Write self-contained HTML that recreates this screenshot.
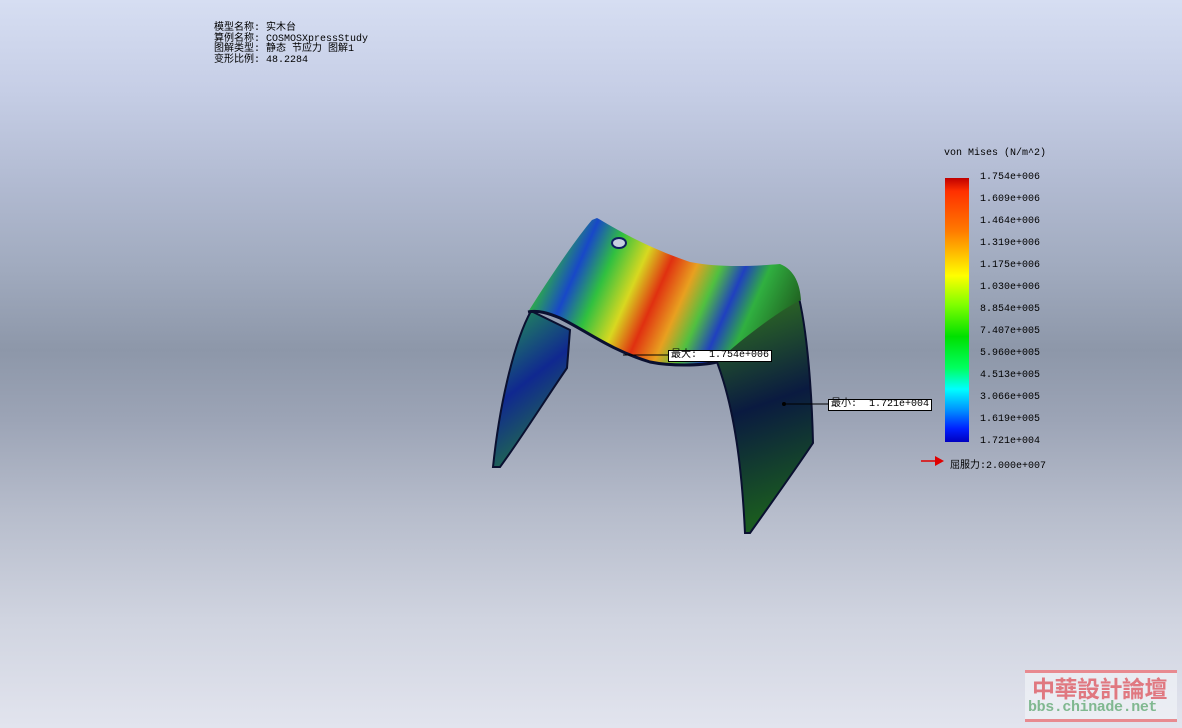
<!DOCTYPE html>
<html><head><meta charset="utf-8"><style>
html,body{margin:0;padding:0}
body{width:1182px;height:728px;overflow:hidden;position:relative;
background:linear-gradient(to bottom,#d6def2 0px,#c6cee6 90px,#b0b9d0 190px,#a0aabe 270px,#8d97a9 350px,#9ca4b6 420px,#b6bccb 510px,#d0d4e0 620px,#e2e4ee 728px);
font-family:"Liberation Mono","WenQuanYi Zen Hei","Noto Sans CJK SC",monospace;}
.info{position:absolute;left:214px;top:24px;font-size:10px;line-height:10.5px;color:#000;white-space:pre}
.lg{position:absolute;font-size:10px;color:#000;white-space:pre}
.bar{position:absolute;left:945px;top:178px;width:24px;height:264px;
background:linear-gradient(to bottom,#c00000 0%,#ff3000 5%,#ff7a00 20%,#ffff00 37%,#80ff00 48%,#00e000 60%,#00ff60 72%,#00ffff 80%,#0090ff 88%,#0020ff 95%,#0000c0 100%)}
.box{position:absolute;background:#fff;border:1px solid #000;font-size:10px;line-height:10px;padding:0 2px;white-space:pre}
</style></head><body>
<div class="info">模型名称: 实木台
算例名称: COSMOSXpressStudy
图解类型: 静态 节应力 图解1
变形比例: 48.2284</div>

<svg width="1182" height="728" style="position:absolute;left:0;top:0">
<defs>
<linearGradient id="seat" gradientUnits="userSpaceOnUse" x1="545" y1="260" x2="775" y2="362">
<stop offset="0" stop-color="#30c030"/>
<stop offset="0.13" stop-color="#1848c8"/>
<stop offset="0.24" stop-color="#30c040"/>
<stop offset="0.36" stop-color="#d8d820"/>
<stop offset="0.46" stop-color="#e03010"/>
<stop offset="0.56" stop-color="#e8a020"/>
<stop offset="0.65" stop-color="#50c040"/>
<stop offset="0.74" stop-color="#2040c0"/>
<stop offset="0.83" stop-color="#30b040"/>
<stop offset="1" stop-color="#206020"/>
</linearGradient>
<linearGradient id="lleg" gradientUnits="userSpaceOnUse" x1="500" y1="330" x2="570" y2="420">
<stop offset="0" stop-color="#208060"/>
<stop offset="0.5" stop-color="#102890"/>
<stop offset="1" stop-color="#206850"/>
</linearGradient>
<linearGradient id="rleg" gradientUnits="userSpaceOnUse" x1="740" y1="300" x2="810" y2="500">
<stop offset="0" stop-color="#307020"/>
<stop offset="0.5" stop-color="#0a1a40"/>
<stop offset="1" stop-color="#1a5a20"/>
</linearGradient>
</defs>
<path d="M531,311 C515,340 500,400 493,467 L500,467 C520,440 545,400 567,368 L570,330 Z" fill="url(#lleg)" stroke="#0a1030" stroke-width="2"/>
<path d="M717,362 C735,410 742,470 745,533 L750,533 C770,505 795,470 813,443 C812,400 808,330 797,290 L760,290 Z" fill="url(#rleg)" stroke="#0a1030" stroke-width="2"/>
<path d="M597,218 C610,225 640,245 690,262 C720,268 755,266 780,264 C795,270 800,285 801,300 C780,310 740,340 717,362 C700,366 670,366 650,362 C610,350 585,330 560,318 C548,313 538,310 528,312 C548,280 575,240 592,220 Z" fill="url(#seat)"/>
<path d="M528,312 C538,310 548,313 560,318 C585,330 610,350 650,362 C670,366 700,366 717,362" fill="none" stroke="#0a1030" stroke-width="3"/>
<ellipse cx="619" cy="243" rx="7" ry="5" fill="#c8d0e0" stroke="#102060" stroke-width="2"/>
<line x1="623" y1="355" x2="669" y2="355" stroke="#000"/>
<line x1="784" y1="404" x2="829" y2="404" stroke="#000"/>
<circle cx="784" cy="404" r="2" fill="#000"/>
<line x1="921" y1="461" x2="936" y2="461" stroke="#e00000" stroke-width="1.5"/>
<polygon points="935,456 944,461 935,466" fill="#e00000"/>
</svg>

<div class="box" style="left:668px;top:350px">最大:  1.754e+006</div>
<div class="box" style="left:828px;top:399px">最小:  1.721e+004</div>

<div class="lg" style="left:944px;top:148px">von Mises (N/m^2)</div>
<div class="bar"></div>
<div class="lg" style="left:980px;top:167px;line-height:22px">1.754e+006
1.609e+006
1.464e+006
1.319e+006
1.175e+006
1.030e+006
8.854e+005
7.407e+005
5.960e+005
4.513e+005
3.066e+005
1.619e+005
1.721e+004</div>
<div class="lg" style="left:950px;top:456px">屈服力:2.000e+007</div>

<div style="position:absolute;left:1025px;top:670px;width:152px;height:52px;background:rgba(240,242,246,0.7)">
<div style="position:absolute;left:0;top:0;width:152px;height:3px;background:#e88a90"></div>
<div style="position:absolute;left:7px;top:4px;font-family:'WenQuanYi Zen Hei','Noto Sans CJK TC',sans-serif;font-weight:bold;font-size:23px;line-height:26px;color:#e07880;letter-spacing:-0.5px">中華設計論壇</div>
<div style="position:absolute;left:3px;top:29px;font-family:'Liberation Mono',monospace;font-weight:bold;font-size:15px;line-height:18px;color:#80b890;letter-spacing:-0.4px">bbs.chinade.net</div>
<div style="position:absolute;left:0;top:49px;width:152px;height:3px;background:#e88a90"></div>
</div>
</body></html>
